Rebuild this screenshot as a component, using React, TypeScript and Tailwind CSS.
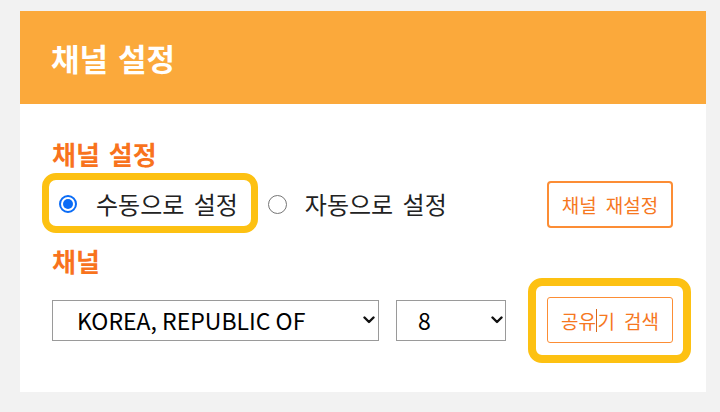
import React from "react";

const KR = "font-['Noto_Sans_CJK_KR','Noto_Sans',sans-serif]";

function Chevron() {
  return (
    <svg width="12" height="8" viewBox="0 0 12 8" className="shrink-0">
      <path d="M1.5 1.5 L6 6 L10.5 1.5" fill="none" stroke="#111" strokeWidth="2.4" strokeLinecap="round" strokeLinejoin="round" />
    </svg>
  );
}

export default function App() {
  return (
    <div className={`min-h-[412px] w-[720px] bg-[#f2f2f2] pt-[11px] pl-[20px] ${KR}`}>
      <div className="w-[686px] h-[381px] bg-white flex flex-col">
        <div className="h-[93px] bg-[#fba93b] flex items-center pl-[31px]">
          <h1 className="text-white font-bold text-[31px] leading-none [word-spacing:3px]">채널 설정</h1>
        </div>
        <div className="flex flex-col pl-[32px] pr-[33px] pt-[34px]">
          <div className="h-[32px] flex items-center text-[26px] font-bold text-[#f8731d] leading-none [word-spacing:3px]">채널 설정</div>
          <div className="relative mt-[10px] h-[48px] flex items-center">
            <div className="absolute left-[-10px] top-[-7px] w-[216px] h-[60px] rounded-[14px] border-[7px] border-[#fdc112] pointer-events-none" />
            <div className="flex items-center">
              <span className="ml-[7px] w-[18px] h-[18px] rounded-full border-[2px] border-[#0b6cf6] flex items-center justify-center">
                <span className="w-[10px] h-[10px] rounded-full bg-[#0b6cf6]" />
              </span>
              <span className="ml-[19px] text-[24px] text-[#222] leading-none [word-spacing:4px]">수동으로 설정</span>
            </div>
            <div className="flex items-center ml-[30px]">
              <span className="w-[19px] h-[19px] rounded-full border-[1.5px] border-[#767676]" />
              <span className="ml-[18px] text-[24px] text-[#222] leading-none [word-spacing:4px]">자동으로 설정</span>
            </div>
            <button className="ml-auto w-[126px] h-[47px] rounded-[4px] border-[2px] border-[#fc8d35] text-[#f6781f] text-[19px] leading-none flex items-center justify-center [word-spacing:5px]">
              채널 재설정
            </button>
          </div>
          <div className="mt-[17px] h-[32px] flex items-center text-[26px] font-bold text-[#f8731d] leading-none">채널</div>
          <div className="mt-[20px] h-[46px] flex items-center">
            <div className="w-[327px] h-[41px] border-[1.5px] border-[#9a9a9a] flex items-center pl-[24px] pr-[3px]">
              <span className="text-[23px] text-black leading-none flex-1">KOREA, REPUBLIC OF</span>
              <Chevron />
            </div>
            <div className="ml-[17px] w-[110px] h-[41px] border-[1.5px] border-[#9a9a9a] flex items-center pl-[21px] pr-[2px]">
              <span className="text-[23px] text-black leading-none flex-1">8</span>
              <Chevron />
            </div>
            <div className="relative ml-auto">
              <div className="absolute left-[-19px] top-[-19px] w-[163px] h-[85px] rounded-[14px] border-[8px] border-[#fdc112] pointer-events-none" />
              <button className="w-[126px] h-[46px] rounded-[3px] border-[1.5px] border-[#fc8d35] text-[#f6781f] text-[19px] leading-none flex items-center justify-center [word-spacing:5px]">
                <span>공유</span>
                <span className="inline-block w-[1.5px] h-[23px] bg-[#d9661a]" />
                <span>기 검색</span>
              </button>
            </div>
          </div>
        </div>
      </div>
    </div>
  );
}
